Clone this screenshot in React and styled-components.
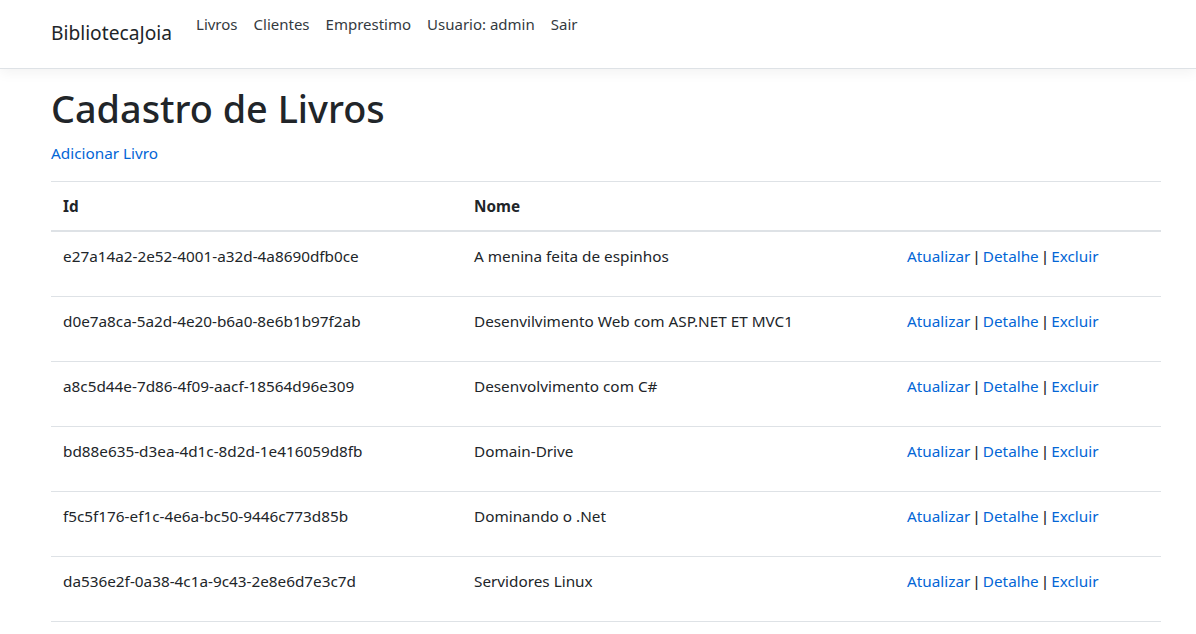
import React from "react";
import styled, { createGlobalStyle } from "styled-components";

const GlobalStyle = createGlobalStyle`
  html, body { margin: 0; padding: 0; background: #fff; }
  body {
    font-family: "Noto Sans", "Open Sans", sans-serif;
    font-size: 15.3px;
    line-height: 24px;
    color: #212529;
  }
  * { box-sizing: border-box; }
`;

const Navbar = styled.header`
  height: 69px;
  background: #fff;
  border-bottom: 1px solid #dee2e6;
  box-shadow: 0 4px 12px rgba(0, 0, 0, 0.05);
  margin-bottom: 16px;
`;

const NavInner = styled.nav`
  width: 1110px;
  margin-left: 51px;
  display: flex;
  align-items: flex-start;
`;

const Brand = styled.a`
  margin-top: 18px;
  margin-right: 16px;
  font-size: 19.2px;
  line-height: 30px;
  color: #212529;
  text-decoration: none;
  white-space: nowrap;
`;

const NavList = styled.ul`
  display: flex;
  list-style: none;
  margin: 12px 0 0;
  padding: 0;
`;

const NavLink = styled.a`
  display: block;
  padding: 0 8px;
  font-size: 15px;
  color: #343a40;
  text-decoration: none;
  white-space: nowrap;
`;

const Main = styled.main`
  width: 1110px;
  margin-left: 51px;
`;

const Title = styled.h1`
  margin: 0 0 8px;
  font-size: 37.8px;
  line-height: 48px;
  font-weight: 500;
`;

const Para = styled.p`
  margin: 0 0 16px;
`;

const Link = styled.a`
  color: #0366d6;
  text-decoration: none;
`;

const Sep = styled.span`
  font-family: "Liberation Sans", Arial, sans-serif;
  font-size: 15.3px;
  line-height: 1;
  color: #212529;
`;

const Table = styled.table`
  width: 1110px;
  border-collapse: collapse;
  table-layout: fixed;
`;

const Th = styled.th`
  text-align: left;
  font-weight: 700;
  padding: 12px;
  border-top: 1px solid #dee2e6;
  border-bottom: 2px solid #dee2e6;
  vertical-align: bottom;
`;

const Td = styled.td`
  height: 65px;
  padding: 12px 12px 28px;
  border-top: 1px solid #dee2e6;
  vertical-align: top;
  white-space: nowrap;
`;

const LastRow = styled.tr`
  td { border-bottom: 1px solid #dee2e6; }
`;

const Row = styled.tr``;

const books = [
  ["e27a14a2-2e52-4001-a32d-4a8690dfb0ce", "A menina feita de espinhos"],
  ["d0e7a8ca-5a2d-4e20-b6a0-8e6b1b97f2ab", "Desenvilvimento Web com ASP.NET ET MVC1"],
  ["a8c5d44e-7d86-4f09-aacf-18564d96e309", "Desenvolvimento com C#"],
  ["bd88e635-d3ea-4d1c-8d2d-1e416059d8fb", "Domain-Drive"],
  ["f5c5f176-ef1c-4e6a-bc50-9446c773d85b", "Dominando o .Net"],
  ["da536e2f-0a38-4c1a-9c43-2e8e6d7e3c7d", "Servidores Linux"],
];

function Actions() {
  return (
    <>
      <Link href="#">Atualizar</Link>
      <Sep> | </Sep>
      <Link href="#">Detalhe</Link>
      <Sep> | </Sep>
      <Link href="#">Excluir</Link>
    </>
  );
}

export default function App() {
  return (
    <>
      <GlobalStyle />
      <Navbar>
        <NavInner>
          <Brand href="#">BibliotecaJoia</Brand>
          <NavList>
            {["Livros", "Clientes", "Emprestimo", "Usuario: admin", "Sair"].map((t) => (
              <li key={t}>
                <NavLink href="#">{t}</NavLink>
              </li>
            ))}
          </NavList>
        </NavInner>
      </Navbar>
      <Main>
        <Title>Cadastro de Livros</Title>
        <Para>
          <Link href="#">Adicionar Livro</Link>
        </Para>
        <Table>
          <colgroup>
            <col style={{ width: 411 }} />
            <col style={{ width: 433 }} />
            <col style={{ width: 266 }} />
          </colgroup>
          <thead>
            <tr>
              <Th>Id</Th>
              <Th>Nome</Th>
              <Th></Th>
            </tr>
          </thead>
          <tbody>
            {books.map(([id, name], i) => {
              const R = i === books.length - 1 ? LastRow : Row;
              return (
                <R key={id}>
                  <Td>{id}</Td>
                  <Td>{name}</Td>
                  <Td>
                    <Actions />
                  </Td>
                </R>
              );
            })}
          </tbody>
        </Table>
      </Main>
    </>
  );
}
